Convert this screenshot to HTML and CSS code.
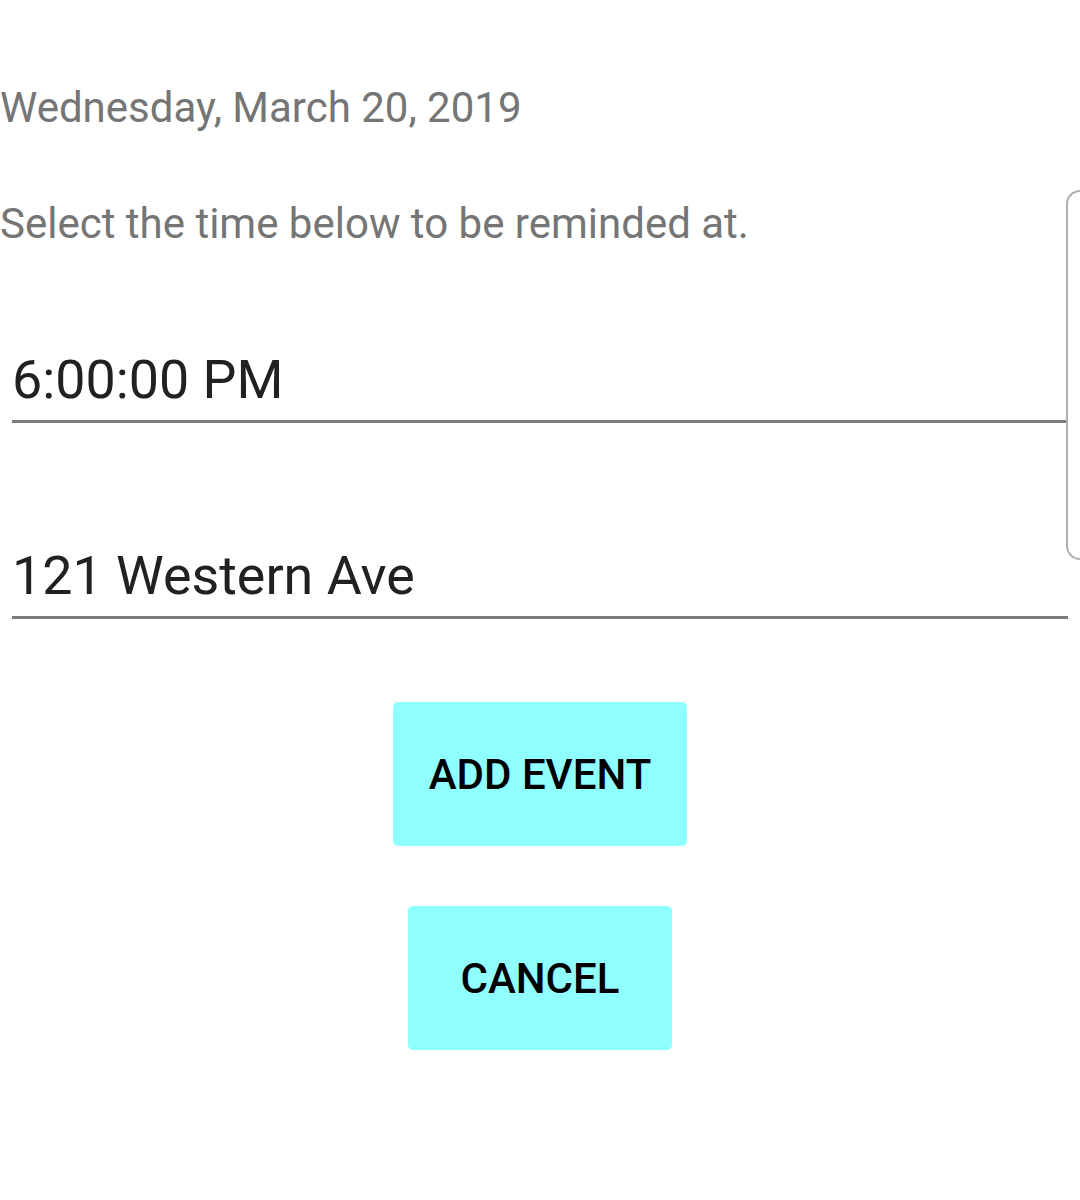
FILE: index.html
```html
<!DOCTYPE html>
<html>
<head>
<meta charset="utf-8">
<link rel="stylesheet" href="styles.css">
</head>
<body>
<div class="screen">
  <main class="form">
    <p class="date">Wednesday, March 20, 2019</p>
    <p class="hint">Select the time below to be reminded at.</p>
    <div class="field field-time">6:00:00 PM</div>
    <div class="field field-address">121 Western Ave</div>
    <div class="actions">
      <button class="btn btn-add">ADD EVENT</button>
      <button class="btn btn-cancel">CANCEL</button>
    </div>
  </main>
  <aside class="side-card"></aside>
</div>
</body>
</html>
```

FILE: styles.css
```css
html, body {
  margin: 0;
  padding: 0;
  background: #ffffff;
}

body {
  font-family: Roboto, "Noto Sans", "Liberation Sans", sans-serif;
  width: 1080px;
  height: 1200px;
  overflow: hidden;
}

.screen {
  display: flex;
  align-items: flex-start;
  width: 1080px;
}

.form {
  width: 1066px;
  flex: none;
  display: flex;
  flex-direction: column;
}

.date,
.hint {
  margin: 0;
  font-size: 42px;
  line-height: 50px;
  color: #757575;
  white-space: nowrap;
}

.date {
  margin-top: 83px;
}

.hint {
  margin-top: 66px;
}

.field {
  margin-left: 12px;
  font-size: 53.8px;
  line-height: 62px;
  color: #212121;
  padding-bottom: 9px;
  border-bottom: 3px solid #7a7a7a;
}

.field-time {
  margin-top: 100px;
}

.field-address {
  margin-top: 122px;
  margin-right: -2px;
}

.actions {
  display: flex;
  flex-direction: column;
  align-items: center;
  gap: 60px;
  margin-top: 83px;
  padding-left: 14px;
}

.btn {
  height: 144px;
  min-width: 264px;
  border: none;
  border-radius: 5px;
  background: #90ffff;
  color: #000000;
  font-family: Roboto, "Noto Sans", "Liberation Sans", sans-serif;
  font-weight: 500;
  font-size: 42px;
  padding: 0 37px;
  cursor: pointer;
}

.btn-add {
  width: 294px;
  padding: 0;
}

.side-card {
  flex: none;
  width: 40px;
  height: 370px;
  margin-top: 190px;
  border: 2px solid #b0b0b0;
  border-right: none;
  border-radius: 14px 0 0 14px;
  box-sizing: border-box;
}
```
